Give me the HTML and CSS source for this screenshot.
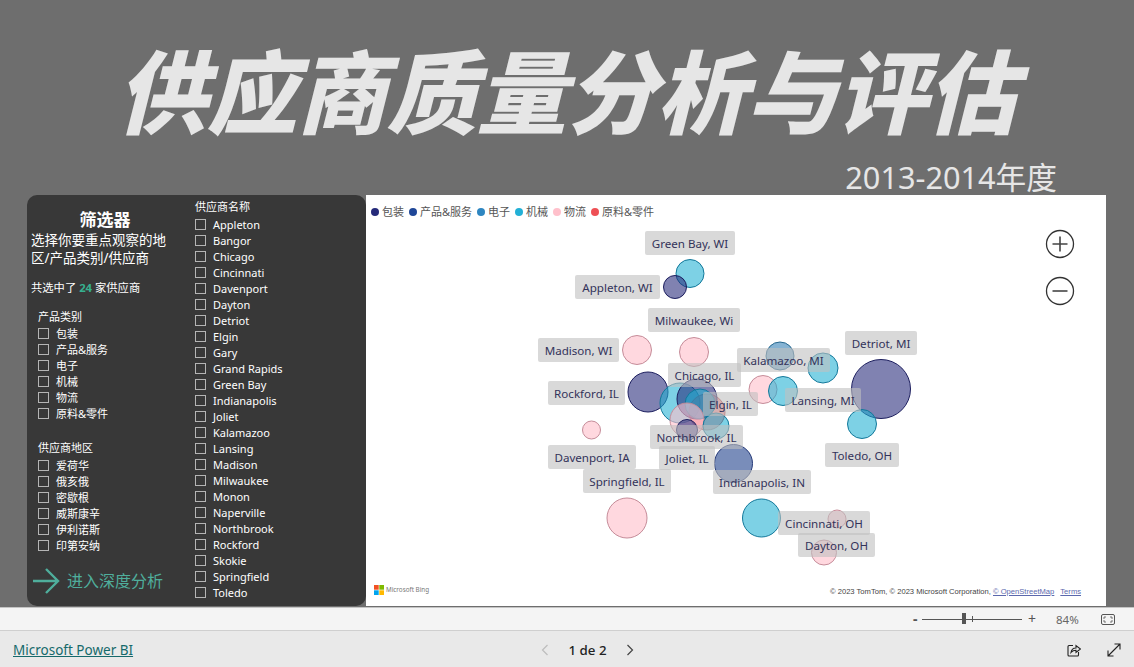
FILE: index.html
```html
<!DOCTYPE html>
<html lang="zh">
<head>
<meta charset="utf-8">
<title>供应商质量分析与评估</title>
<link rel="stylesheet" href="styles.css">
</head>
<body>
<div class="canvas">
  <header class="hero">
    <h1 class="hero-title">供应商质量分析与评估</h1>
    <div class="hero-sub">2013-2014年度</div>
  </header>
  <div class="report">
    <aside class="filters">
      <div class="filters-left">
        <h2 class="filters-title">筛选器</h2>
        <p class="filters-desc">选择你要重点观察的地区/产品类别/供应商</p>
        <p class="filters-count">共选中了 <b>24</b> 家供应商</p>
        <section class="slicer slicer-cat">
          <h3 class="slicer-head">产品类别</h3>
          <ul class="slicer-list">
            <li><i></i>包装</li><li><i></i>产品&amp;服务</li><li><i></i>电子</li><li><i></i>机械</li><li><i></i>物流</li><li><i></i>原料&amp;零件</li>
          </ul>
        </section>
        <section class="slicer slicer-region">
          <h3 class="slicer-head">供应商地区</h3>
          <ul class="slicer-list">
            <li><i></i>爱荷华</li><li><i></i>俄亥俄</li><li><i></i>密歇根</li><li><i></i>威斯康辛</li><li><i></i>伊利诺斯</li><li><i></i>印第安纳</li>
          </ul>
        </section>
        <div class="deep-link">
          <svg class="deep-arrow" width="28" height="28" viewBox="0 0 28 28"><path d="M1 14H26M14 2L26 14L14 26" fill="none" stroke="#4fae9c" stroke-width="2.4"/></svg>
          <span>进入深度分析</span>
        </div>
      </div>
      <section class="slicer slicer-names">
        <h3 class="slicer-head">供应商名称</h3>
        <ul class="slicer-list">
          <li><i></i>Appleton</li><li><i></i>Bangor</li><li><i></i>Chicago</li><li><i></i>Cincinnati</li><li><i></i>Davenport</li><li><i></i>Dayton</li><li><i></i>Detriot</li><li><i></i>Elgin</li><li><i></i>Gary</li><li><i></i>Grand Rapids</li><li><i></i>Green Bay</li><li><i></i>Indianapolis</li><li><i></i>Joliet</li><li><i></i>Kalamazoo</li><li><i></i>Lansing</li><li><i></i>Madison</li><li><i></i>Milwaukee</li><li><i></i>Monon</li><li><i></i>Naperville</li><li><i></i>Northbrook</li><li><i></i>Rockford</li><li><i></i>Skokie</li><li><i></i>Springfield</li><li><i></i>Toledo</li>
        </ul>
      </section>
    </aside>
    <main class="map">
      <svg class="bubbles" width="740" height="411" viewBox="366 195 740 411">
        <circle class="cy" cx="690" cy="273.500" r="14"/>
        <circle class="na" cx="675" cy="287" r="11.500"/>
        <circle class="pk" cx="637" cy="350" r="14.500"/>
        <circle class="pk" cx="694" cy="352" r="14.500"/>
        <circle class="bl" cx="780" cy="356" r="14"/>
        <circle class="cy" cx="823" cy="368" r="15"/>
        <circle class="na" cx="881" cy="389" r="29.500"/>
        <circle class="na" cx="648" cy="392" r="20"/>
        <circle class="pk" cx="763" cy="389.500" r="14"/>
        <circle class="cy" cx="783" cy="391" r="14.500"/>
        <circle class="cy" cx="862" cy="424" r="14.500"/>
        <circle class="pk" cx="591.500" cy="430" r="9"/>
        <circle class="cy" cx="680" cy="403" r="20"/>
        <circle class="re" cx="707" cy="412" r="18"/>
        <circle class="na" cx="697" cy="399" r="20"/>
        <circle class="cy" cx="700" cy="404" r="15"/>
        <circle class="pk" cx="687" cy="420" r="17"/>
        <circle class="cy" cx="716" cy="426" r="13"/>
        <circle class="na" cx="687" cy="430" r="10.500"/>
        <circle class="nb" cx="733.500" cy="463.500" r="19"/>
        <circle class="pk" cx="627" cy="518" r="20"/>
        <circle class="cy" cx="761.500" cy="518" r="19"/>
        <circle class="pk" cx="837" cy="519" r="9"/>
        <circle class="pk" cx="824" cy="552.500" r="12.500"/>
      </svg>
      <span class="tag" style="left:279px;top:36px;width:90px">Green Bay, WI</span>
      <span class="tag" style="left:209px;top:80px;width:85px">Appleton, WI</span>
      <span class="tag" style="left:282px;top:113px;width:92px">Milwaukee, Wi</span>
      <span class="tag" style="left:172px;top:143px;width:81px">Madison, WI</span>
      <span class="tag" style="left:371px;top:153px;width:93px">Kalamazoo, MI</span>
      <span class="tag" style="left:479px;top:136px;width:72px">Detriot, MI</span>
      <span class="tag" style="left:302px;top:168px;width:73px">Chicago, IL</span>
      <span class="tag" style="left:182px;top:186px;width:77px">Rockford, IL</span>
      <span class="tag" style="left:337px;top:197px;width:55px">Elgin, IL</span>
      <span class="tag" style="left:419px;top:193px;width:76px">Lansing, MI</span>
      <span class="tag" style="left:284px;top:230px;width:93px">Northbrook, IL</span>
      <span class="tag" style="left:459px;top:248px;width:74px">Toledo, OH</span>
      <span class="tag" style="left:182px;top:250px;width:88px">Davenport, IA</span>
      <span class="tag" style="left:293px;top:251px;width:56px">Joliet, IL</span>
      <span class="tag" style="left:217px;top:274px;width:88px">Springfield, IL</span>
      <span class="tag" style="left:347px;top:275px;width:98px">Indianapolis, IN</span>
      <span class="tag" style="left:412px;top:316px;width:92px">Cincinnati, OH</span>
      <span class="tag" style="left:432px;top:338px;width:77px">Dayton, OH</span>
      <ul class="legend">
        <li><i class="d1"></i>包装</li><li><i class="d2"></i>产品&amp;服务</li><li><i class="d3"></i>电子</li><li><i class="d4"></i>机械</li><li><i class="d5"></i>物流</li><li><i class="d6"></i>原料&amp;零件</li>
      </ul>
      <div class="zoom-btns">
        <svg width="30" height="30" viewBox="0 0 30 30"><circle cx="15" cy="15" r="13.500" fill="#fff" stroke="#333" stroke-width="1.300"/><path d="M7.500 15H22.500M15 7.500V22.500" stroke="#444" stroke-width="1.600"/></svg>
        <svg width="30" height="30" viewBox="0 0 30 30"><circle cx="15" cy="15" r="13.500" fill="#fff" stroke="#333" stroke-width="1.300"/><path d="M7.500 15H22.500" stroke="#444" stroke-width="1.600"/></svg>
      </div>
      <div class="map-foot">
        <div class="bing">
          <svg width="10" height="10" viewBox="0 0 10 10"><rect width="4.700" height="4.700" fill="#f25022"/><rect x="5.300" width="4.700" height="4.700" fill="#7fba00"/><rect y="5.300" width="4.700" height="4.700" fill="#00a4ef"/><rect x="5.300" y="5.300" width="4.700" height="4.700" fill="#ffb900"/></svg>
          <span>Microsoft Bing</span>
        </div>
        <div class="attrib">© 2023 TomTom, © 2023 Microsoft Corporation, <a>© OpenStreetMap</a><a class="terms">Terms</a></div>
      </div>
    </main>
  </div>
</div>
<div class="statusbar">
  <span class="z-minus">-</span>
  <div class="slider"><span class="slider-thumb"></span><span class="slider-tick"></span></div>
  <span class="z-plus">+</span>
  <span class="z-pct">84%</span>
  <svg class="z-fit" width="14" height="11" viewBox="0 0 14 11"><rect x=".5" y=".5" width="13" height="10" rx="1.500" fill="none" stroke="#555"/><path d="M3 5V3H5M9 3H11V5M11 6V8H9M5 8H3V6" fill="none" stroke="#555" stroke-width=".8"/></svg>
</div>
<footer class="footer">
  <a class="brand">Microsoft Power BI</a>
  <nav class="pager">
    <svg width="8" height="12" viewBox="0 0 8 12"><path d="M6.500 1L1.500 6L6.500 11" fill="none" stroke="#bdbdbd" stroke-width="1.200"/></svg>
    <span>1 de 2</span>
    <svg width="8" height="12" viewBox="0 0 8 12"><path d="M1.500 1L6.500 6L1.500 11" fill="none" stroke="#444" stroke-width="1.200"/></svg>
  </nav>
  <div class="foot-icons">
    <svg width="14" height="14" viewBox="0 0 14 14"><path d="M6 2.500H2A1 1 0 0 0 1 3.500V12A1 1 0 0 0 2 13H10.500A1 1 0 0 0 11.500 12V9" fill="none" stroke="#222" stroke-width="1.100"/><path d="M4 9.500C4.500 6.500 6.500 5 9 5V2.500L13.500 6L9 9.500V7.200C7 7.200 5.300 8 4 9.500Z" fill="none" stroke="#222" stroke-width="1.100"/></svg>
    <svg width="14" height="14" viewBox="0 0 14 14"><path d="M1 13L13 1M7.500 1H13V6.500M1 7.500V13H6.500" fill="none" stroke="#222" stroke-width="1.100"/></svg>
  </div>
</footer>
</body>
</html>
```
FILE: styles.css
```css
* { box-sizing: border-box; }
html, body { margin: 0; padding: 0; height: 667px; overflow: hidden; }
body { font-family: "Noto Sans", "Noto Sans CJK SC", sans-serif; background: #e9e9e9; display: flex; flex-direction: column; }
ul { list-style: none; margin: 0; padding: 0; }
h1, h2, h3, p { margin: 0; font-weight: normal; }

.canvas { height: 607px; background: #6e6e6e; padding: 0 28px 1px 27px; display: flex; flex-direction: column; }
.hero { height: 195px; display: flex; flex-direction: column; align-items: center; flex: none; }
.hero-title { font-family: "Noto Sans CJK SC", sans-serif; font-size: 90.500px; font-weight: 900; font-style: italic; color: #e6e6e6; line-height: 100px; margin-top: 38px; letter-spacing: -.5px; white-space: nowrap; }
.hero-sub { align-self: flex-end; font-family: "Noto Sans", "Noto Sans CJK SC", sans-serif; font-size: 30.700px; line-height: 38px; color: #e6e6e6; margin: 20px 49px 0 0; white-space: nowrap; }

.report { flex: 1; display: flex; min-height: 0; }
.filters { width: 339px; background: #383838; border-radius: 10px; color: #fff; display: flex; flex: none; font-family: "Noto Sans", "Noto Sans CJK SC", sans-serif; }
.filters-left { width: 168px; padding: 14px 0 0 4px; flex: none; }
.filters-title { font-size: 17px; font-weight: 700; text-align: center; line-height: 22px; width: 148px; }
.filters-desc { font-size: 13.500px; line-height: 18px; width: 140px; }
.filters-count { font-size: 11.300px; line-height: 16px; margin-top: 13px; }
.filters-count b { color: #36b08f; }

.slicer-head { font-size: 11px; line-height: 16px; }
.slicer-list li { display: flex; align-items: center; height: 16px; font-size: 11px; white-space: nowrap; }
.slicer-list i { width: 11px; height: 11px; border: 1px solid #b5b5b5; margin-right: 7px; flex: none; }
.slicer-cat { margin: 13px 0 0 7px; }
.slicer-region { margin: 19px 0 0 7px; }
.slicer-region .slicer-list { margin-top: 1px; }
.slicer-names { padding-top: 4px; }
.slicer-names .slicer-list { margin-top: 1px; }

.deep-link { display: flex; align-items: center; margin: 14px 0 0 1px; color: #4fae9c; font-size: 16px; line-height: 26px; gap: 7px; }
.deep-arrow { flex: none; }

.map { position: relative; flex: 1; background: #fff; display: flex; flex-direction: column; justify-content: space-between; }
.bubbles { position: absolute; left: 0; top: 0; }
.bubbles circle { stroke-width: 1; }
.cy { fill: rgba(31,176,210,.58); stroke: #12789a; }
.na { fill: rgba(37,40,120,.58); stroke: #1c1e5e; }
.nb { fill: rgba(31,65,140,.6); stroke: #263a78; }
.bl { fill: rgba(46,124,180,.58); stroke: #27688f; }
.pk { fill: rgba(255,192,203,.62); stroke: #c58c99; }
.re { fill: rgba(238,80,85,.58); stroke: #b7474c; }
.tag { position: absolute; height: 24px; line-height: 25px; background: rgba(191,191,191,.6); border-radius: 2px; color: #33335a; font-size: 11.600px; text-align: center; white-space: nowrap; }

.legend { position: relative; display: flex; gap: 5px; padding: 9px 0 0 5px; font-size: 11px; line-height: 16px; color: #555; font-family: "Noto Sans", "Noto Sans CJK SC", sans-serif; }
.legend li { display: flex; align-items: center; gap: 3px; white-space: nowrap; }
.legend i { width: 8px; height: 8px; border-radius: 50%; }
.d1 { background: #252a7a; } .d2 { background: #1f4798; } .d3 { background: #2e86c1; } .d4 { background: #22b0d6; } .d5 { background: #ffc0cb; } .d6 { background: #ee5055; }

.zoom-btns { position: absolute; left: 679px; top: 34px; display: flex; flex-direction: column; gap: 17px; }
.map-foot { position: relative; display: flex; justify-content: space-between; align-items: flex-end; padding: 0 25px 9px 8px; }
.bing { display: flex; align-items: center; gap: 2px; font-size: 6.300px; line-height: 10px; color: #777; padding-bottom: 2px; }
.attrib { font-family: "Liberation Sans", sans-serif; font-size: 7.600px; line-height: 10px; color: #444; white-space: nowrap; }
.attrib a { color: #5b68ad; text-decoration: underline; }
.attrib .terms { margin-left: 6px; }

.statusbar { height: 24px; background: #f4f4f4; border-top: 1px solid #c4c4c4; border-bottom: 1px solid #cfcfcf; display: flex; align-items: center; color: #555; padding-left: 913px; flex: none; }
.z-minus { width: 9px; font-size: 14px; font-weight: 700; line-height: 20px; }
.slider { position: relative; width: 100px; height: 1px; background: #555; }
.slider-thumb { position: absolute; left: 40px; top: -6px; width: 4px; height: 11px; background: #555; }
.slider-tick { position: absolute; left: 50px; top: -3px; width: 1px; height: 6px; background: #555; }
.z-plus { margin-left: 6px; font-size: 14px; width: 24px; line-height: 20px; }
.z-pct { font-size: 11.500px; width: 44px; margin-left: 4px; color: #666; }
.z-fit { flex: none; margin-left: 1px; }

.footer { flex: 1; background: #e9e9e9; display: grid; grid-template-columns: 1fr auto 1fr; align-items: center; padding: 2px 13px 0; }
.brand { font-size: 13.500px; color: #16696b; text-decoration: underline; white-space: nowrap; }
.pager { display: flex; align-items: center; gap: 19px; font-size: 13.300px; font-weight: 500; color: #222; margin-left: 41px; }
.foot-icons { justify-self: end; display: flex; gap: 26px; }
```
